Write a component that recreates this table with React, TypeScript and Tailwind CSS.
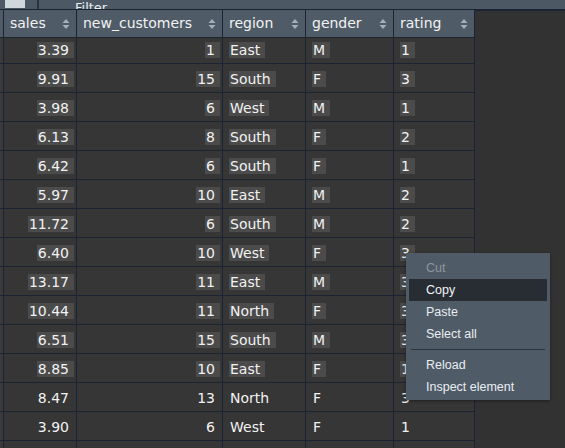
import React from "react";

const rows: [string, string, string, string, string][] = [
  ["3.39", "1", "East", "M", "1"],
  ["9.91", "15", "South", "F", "3"],
  ["3.98", "6", "West", "M", "1"],
  ["6.13", "8", "South", "F", "2"],
  ["6.42", "6", "South", "F", "1"],
  ["5.97", "10", "East", "M", "2"],
  ["11.72", "6", "South", "M", "2"],
  ["6.40", "10", "West", "F", "3"],
  ["13.17", "11", "East", "M", "3"],
  ["10.44", "11", "North", "F", "3"],
  ["6.51", "15", "South", "M", "3"],
  ["8.85", "10", "East", "F", "1"],
  ["8.47", "13", "North", "F", "3"],
  ["3.90", "6", "West", "F", "1"],
  ["", "", "", "", ""],
];

const cols = [
  { name: "sales", w: "w-[73px]", right: true },
  { name: "new_customers", w: "w-[146px]", right: true },
  { name: "region", w: "w-[83px]", right: false },
  { name: "gender", w: "w-[88px]", right: false },
  { name: "rating", w: "w-[81px]", right: false },
];

function SortIcon() {
  return (
    <svg width="8" height="12" viewBox="0 0 8 12" className="shrink-0">
      <path d="M4 1 L7.5 5 L0.5 5 Z" fill="#a7afb6" />
      <path d="M4 11 L7.5 7 L0.5 7 Z" fill="#a7afb6" />
    </svg>
  );
}

function Cell({ text, right, selected }: { text: string; right: boolean; selected: boolean }) {
  return (
    <span
      className={
        (selected && text ? "bg-[#4b4b4b] " : "") +
        (right ? "pr-[5px] -mr-[5px] pl-[1px]" : "pr-[5px] pl-[1px] -ml-[1px]") +
        " leading-[16px]"
      }
    >
      {text}
    </span>
  );
}

const menu = [
  { label: "Cut", disabled: true },
  { label: "Copy", active: true },
  { label: "Paste" },
  { label: "Select all" },
  { sep: true },
  { label: "Reload" },
  { label: "Inspect element" },
];

export default function App() {
  return (
    <div
      className="relative h-[448px] w-[565px] overflow-hidden bg-[#323232] text-[#f2f2f2]"
      style={{ fontFamily: '"DejaVu Sans", "Noto Sans", sans-serif' }}
    >
      {/* toolbar, mostly scrolled off */}
      <div className="flex h-[10px] items-end gap-3 overflow-hidden border-b border-[#1a2433] bg-[#4c5965] pl-[5px]">
        <div className="mb-[1px] h-[8px] w-[20px] bg-[#cfd6dc]" />
        <div className="h-[9px] w-[2px] bg-[#2a3440]" />
        <span className="-mb-[7px] pl-[24px] text-[13px] leading-[16px] text-[#e8eef2]">Filter</span>
      </div>

      <div className="flex">
        <div className="flex flex-col">
          {/* header */}
          <div className="relative z-10 flex h-[28px] border-b border-[#1a2433] bg-[#4f5c68]">
            <div className="w-[4px] border-r border-[#1a2433]" />
            {cols.map((c) => (
              <div
                key={c.name}
                className={`${c.w} flex items-center justify-between border-r border-[#1a2433] pl-[6px] pr-[6px] text-[14px]`}
              >
                <span className="-mt-[1px]">{c.name}</span>
                <SortIcon />
              </div>
            ))}
          </div>

          {/* body */}
          <div className="-mt-[3px] flex flex-col">
            {rows.map((r, i) => {
              const selected = i < 12;
              return (
                <div key={i} className="flex h-[29px] border-b border-[#1a2433] bg-[#363636]">
                  <div className="w-[4px] border-r border-[#1a2433] bg-[#3a3a3a]" />
                  {cols.map((c, j) => (
                    <div
                      key={c.name}
                      className={`${c.w} flex items-center border-r border-[#1a2433] pt-[1px] text-[14px] ${
                        c.right ? "justify-end pr-[7px]" : "justify-start pl-[7px]"
                      }`}
                    >
                      <Cell text={r[j]} right={c.right} selected={selected} />
                    </div>
                  ))}
                </div>
              );
            })}
          </div>
        </div>
        <div className="flex-1 border-t border-[#1a2433]" />
      </div>

      {/* context menu */}
      <div
        className="absolute left-[406px] top-[253px] w-[144px] bg-[#4f5b66] px-[3px] pb-[2px] pt-[4px] shadow-[0_1px_3px_rgba(0,0,0,0.4)]"
        style={{ fontFamily: '"Liberation Sans", Arial, sans-serif' }}
      >
        {menu.map((m, i) =>
          m.sep ? (
            <div key={i} className="mx-[2px] my-[4px] h-px bg-[#2c343c]" />
          ) : (
            <div
              key={i}
              className={`flex h-[22px] items-center pl-[17px] text-[12.5px] ${
                m.active ? "bg-[#282d34] text-[#f2f5f7]" : m.disabled ? "text-[#8d969d]" : "text-[#e9eef1]"
              }`}
            >
              {m.label}
            </div>
          )
        )}
      </div>
    </div>
  );
}
